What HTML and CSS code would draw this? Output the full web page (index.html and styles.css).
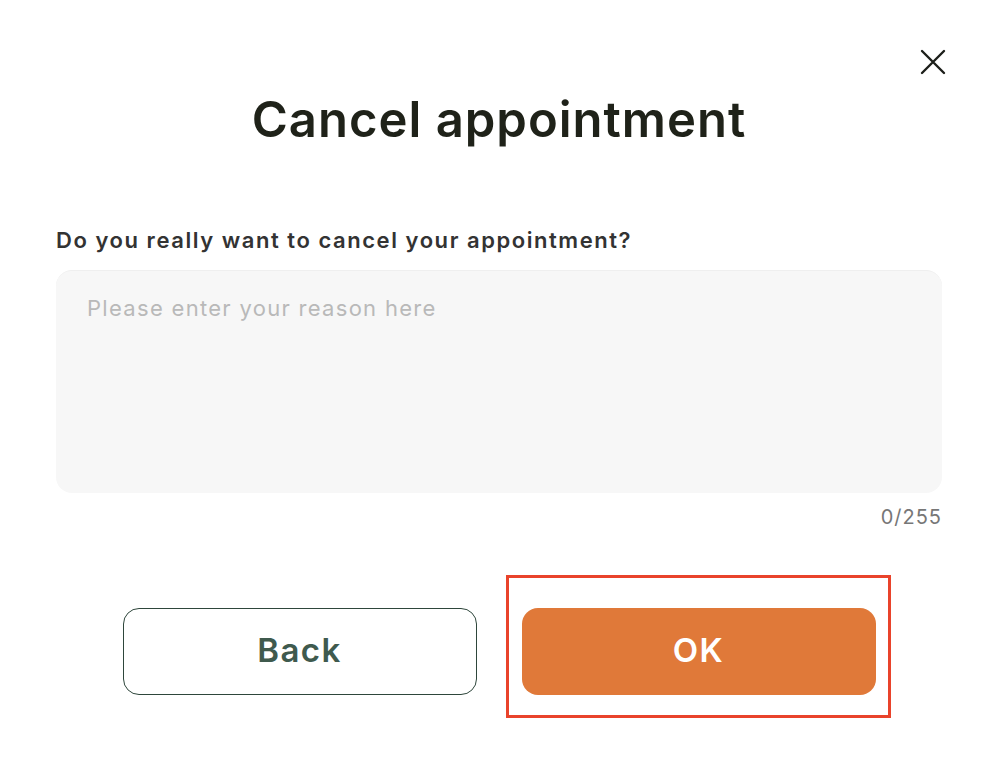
FILE: index.html
```html
<!DOCTYPE html>
<html lang="en">
  <head>
    <meta charset="UTF-8" />
    <meta name="viewport" content="width=device-width, initial-scale=1.0" />
    <title>Cancel appointment</title>
    <link rel="stylesheet" href="styles.css">
  </head>
  <body>
    <div class="modal">
      <button class="close" type="button" aria-label="Close">
        <svg width="26" height="26" viewBox="0 0 26 26">
          <path d="M2 2 L24 24 M24 2 L2 24" stroke="#1c1f1a" stroke-width="2.4" stroke-linecap="round" fill="none"/>
        </svg>
      </button>
      <h1 class="title">Cancel appointment</h1>
      <form class="cancel-form" onsubmit="event.preventDefault();">
        <label class="question" for="reason">Do you really want to cancel your appointment?</label>
        <textarea id="reason" class="reason" maxlength="255" placeholder="Please enter your reason here"></textarea>
        <div class="counter">0/255</div>
        <div class="actions">
          <button class="btn btn-back" type="button">Back</button>
          <div class="highlight">
            <button class="btn btn-ok" type="submit">OK</button>
          </div>
        </div>
      </form>
    </div>
  </body>
</html>
```

FILE: styles.css
```css
body,
html {
  margin: 0;
  background-color: #ffffff;
  font-family: Inter, "Noto Sans", Arial, sans-serif;
}
.modal {
  position: relative;
  width: 1000px;
  height: 763px;
  box-sizing: border-box;
  padding: 88px 58px 0 56px;
}
.close {
  position: absolute;
  top: 49px;
  right: 54px;
  width: 26px;
  height: 26px;
  padding: 0;
  border: none;
  background: none;
  cursor: pointer;
}
.title {
  margin: 0;
  text-align: center;
  font-size: 49px;
  font-weight: 600;
  line-height: 64px;
  letter-spacing: 1px;
  color: #1f2219;
}
.cancel-form {
  display: flex;
  flex-direction: column;
  margin-top: 74px;
}
.question {
  font-size: 22px;
  font-weight: 600;
  line-height: 28px;
  letter-spacing: 1.55px;
  color: #333333;
}
.reason {
  margin-top: 16px;
  height: 223px;
  box-sizing: border-box;
  padding: 24px 31px;
  border: none;
  border-top: 1px solid #efefef;
  border-radius: 16px;
  background-color: #f7f7f7;
  font-family: inherit;
  font-size: 22px;
  letter-spacing: 1.3px;
  resize: none;
  outline: none;
}
.reason::placeholder {
  color: #b9b9b9;
}
.counter {
  margin-top: 12px;
  text-align: right;
  font-size: 20px;
  letter-spacing: 1px;
  color: #777777;
}
.actions {
  display: flex;
  justify-content: center;
  gap: 45px;
  margin-top: 79px;
}
.btn {
  width: 354px;
  height: 87px;
  padding: 0 0 4px;
  border-radius: 16px;
  font-family: inherit;
  font-size: 33px;
  font-weight: 600;
  letter-spacing: 1.5px;
  cursor: pointer;
}
.btn-back {
  background-color: #ffffff;
  border: 1.5px solid #2e463b;
  color: #3f5a4e;
}
.btn-ok {
  display: block;
  background-color: #e07939;
  border: none;
  color: #ffffff;
}
.highlight {
  position: relative;
}
.highlight::after {
  content: "";
  position: absolute;
  top: -33px;
  left: -16px;
  right: -15px;
  bottom: -23px;
  border: 3px solid #e9432b;
  pointer-events: none;
}
```
